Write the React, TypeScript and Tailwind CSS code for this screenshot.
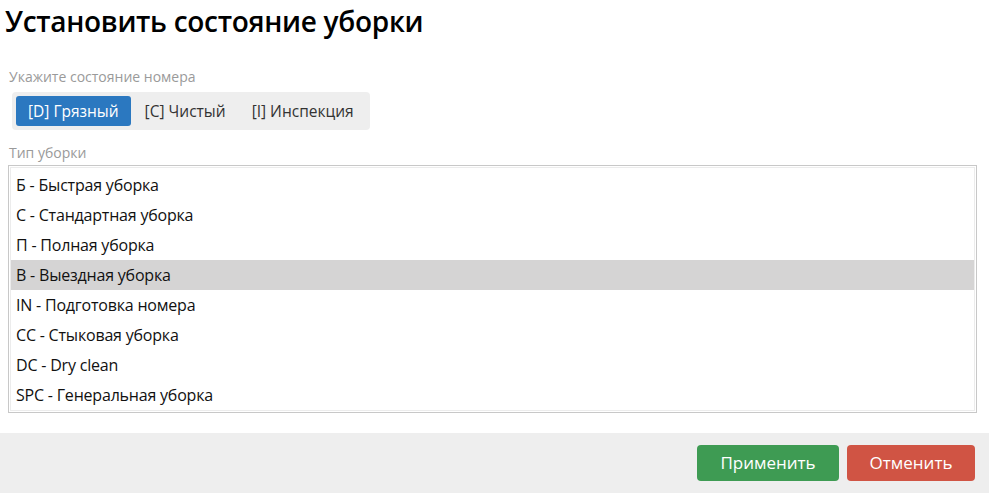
import React from 'react'

const states = [
  { key: 'D', label: '[D] Грязный' },
  { key: 'C', label: '[C] Чистый' },
  { key: 'I', label: '[I] Инспекция' },
]

const cleaningTypes = [
  'Б - Быстрая уборка',
  'С - Стандартная уборка',
  'П - Полная уборка',
  'В - Выездная уборка',
  'IN - Подготовка номера',
  'CC - Стыковая уборка',
  'DC - Dry clean',
  'SPC - Генеральная уборка',
]

export default function App() {
  const [state, setState] = React.useState('D')
  const [selected, setSelected] = React.useState(3)

  return (
    <div className="w-[989px] h-[493px] bg-white flex flex-col font-['Open_Sans',sans-serif] text-[#111]">
      <h1 className="pl-[5px] pt-[2px] h-[40px] text-[28px] leading-[38px] font-semibold tracking-[-0.3px] text-black">
        Установить состояние уборки
      </h1>

      <div className="px-[8px] pt-[28px]">
        <div className="pl-[1px] text-[14px] leading-[18px] text-[#9a9a9a]">Укажите состояние номера</div>
        <div className="mt-[6px] ml-[4px] inline-flex gap-[2px] rounded-[4px] bg-[#eeeeee] p-[4px]">
          {states.map((s) => (
            <button
              key={s.key}
              onClick={() => setState(s.key)}
              className={
                state === s.key
                  ? 'h-[30px] px-[12px] rounded-[3px] bg-[#2b78c0] text-white text-[15.5px] leading-[30px]'
                  : 'h-[30px] px-[12px] rounded-[3px] text-[#333] text-[15.5px] leading-[30px]'
              }
            >
              {s.label}
            </button>
          ))}
        </div>

        <div className="mt-[14px] pl-[1px] text-[14px] leading-[18px] text-[#9a9a9a]">Тип уборки</div>
        <div className="mt-[3px] w-[969px] h-[248px] border border-[#c8c8c8] p-[1px]">
          <div className="h-full border border-[#ececec] pt-[2px]">
            {cleaningTypes.map((t, i) => (
              <div
                key={t}
                onClick={() => setSelected(i)}
                className={
                  selected === i
                    ? 'h-[30px] pl-[5px] bg-[#d5d4d4] text-[16px] leading-[30px] tracking-[-0.2px] text-[#111]'
                    : 'h-[30px] pl-[5px] text-[16px] leading-[30px] tracking-[-0.2px] text-[#111]'
                }
              >
                {t}
              </div>
            ))}
          </div>
        </div>
      </div>

      <div className="mt-auto h-[60px] bg-[#eeeeee] flex items-center justify-end gap-[8px] pr-[14px]">
        <button className="h-[36px] w-[142px] rounded-[4px] bg-[#3e9b53] text-white text-[17px]">Применить</button>
        <button className="h-[36px] w-[128px] rounded-[4px] bg-[#d05444] text-white text-[17px]">Отменить</button>
      </div>
    </div>
  )
}
